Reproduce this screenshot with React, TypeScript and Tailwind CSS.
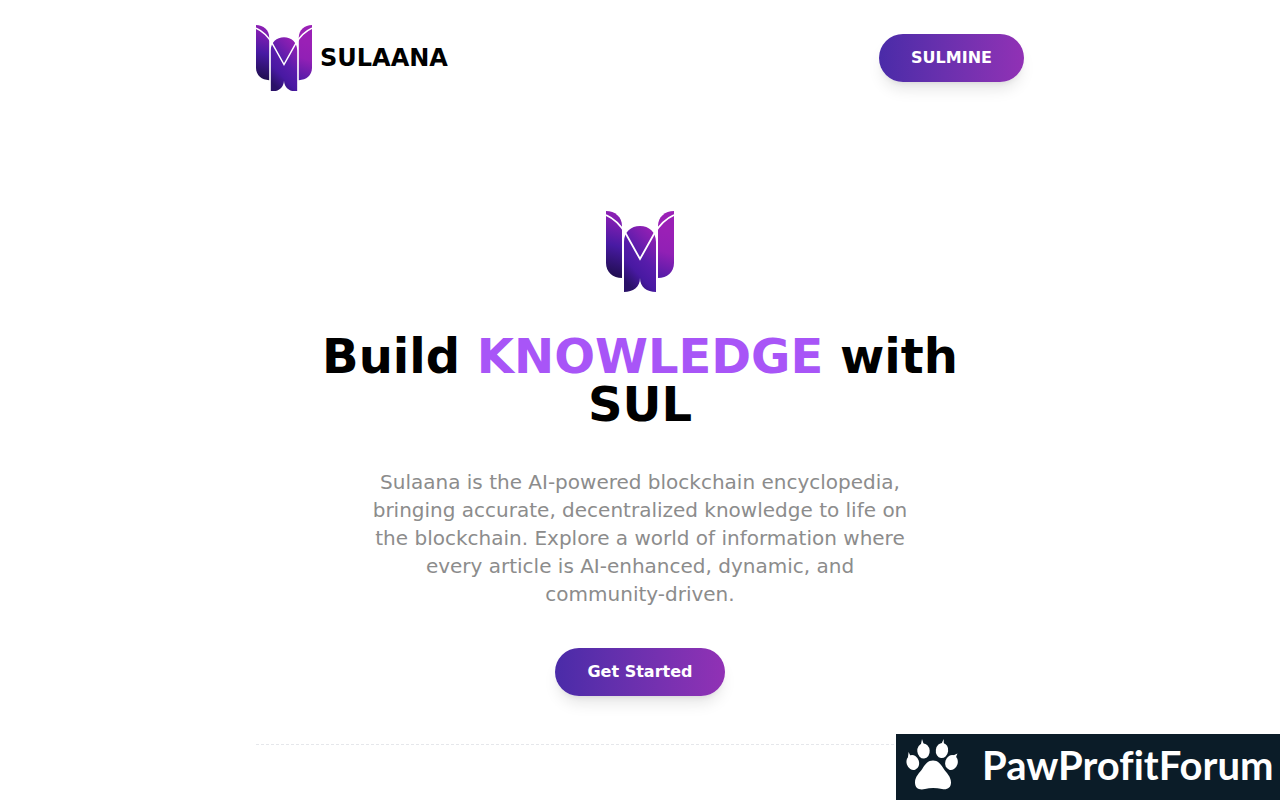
import { useId } from "react";

function Logo({ className }: { className: string }) {
  const id = useId();
  const left = `${id}-left`;
  const body = `${id}-body`;
  const right = `${id}-right`;

  return (
    <svg viewBox="0 0 68 81" className={className} aria-hidden="true">
      <defs>
        <linearGradient id={left} gradientUnits="userSpaceOnUse" x1="16" y1="2" x2="-2" y2="66">
          <stop offset="0" stopColor="#8f1fb4" />
          <stop offset="0.18" stopColor="#7a1eb0" />
          <stop offset="0.5" stopColor="#481aa3" />
          <stop offset="1" stopColor="#1c0d48" />
        </linearGradient>
        <linearGradient id={body} gradientUnits="userSpaceOnUse" x1="46" y1="14" x2="4" y2="54">
          <stop offset="0" stopColor="#9a20b6" />
          <stop offset="0.25" stopColor="#7c1eb0" />
          <stop offset="0.5" stopColor="#581cab" />
          <stop offset="0.75" stopColor="#4819a2" />
          <stop offset="1" stopColor="#2a1168" />
        </linearGradient>
        <linearGradient id={right} gradientUnits="userSpaceOnUse" x1="60" y1="20" x2="44" y2="68">
          <stop offset="0" stopColor="#9a20b6" />
          <stop offset="0.4" stopColor="#9120b5" />
          <stop offset="1" stopColor="#4a1aa5" />
        </linearGradient>
      </defs>
      <path d="M0 0C9 0 16 6 16 15V67C7 67 0 61 0 52Z" fill={`url(#${left})`} />
      <path d="M68 0C59 0 52 6 52 15V67C61 67 68 61 68 52Z" fill={`url(#${right})`} />
      <path
        d="M18 31C18 21 25 15 34 15S50 21 50 31V81C41 81 34 76 34 67C34 76 27 81 18 81Z"
        fill={`url(#${body})`}
      />
      <path
        d="M0 4C7 7 14 13 20 23L34 48L48 23C54 13 61 7 68 4"
        fill="none"
        stroke="#fff"
        strokeWidth="1.8"
      />
    </svg>
  );
}

function Paw() {
  return (
    <svg viewBox="0 0 52 52" className="w-[52px] shrink-0" fill="#fff" aria-hidden="true">
      <ellipse cx="6.8" cy="23.5" rx="6.2" ry="7.5" transform="rotate(-18 6.8 23.5)" />
      <ellipse cx="17.5" cy="12" rx="6.2" ry="7.6" transform="rotate(-5 17.5 12)" />
      <ellipse cx="36" cy="11.5" rx="6.2" ry="7.6" transform="rotate(8 36 11.5)" />
      <ellipse cx="45.5" cy="23.5" rx="6.2" ry="7.5" transform="rotate(18 45.5 23.5)" />
      <path d="M2 18L2.6 13L5 18ZM14.8 6L16 0L18 6ZM35 6L37.6 0L38 6ZM46 17L51.5 14.5L49.5 19Z" />
      <path d="M27 21.500C32 21.500 34.500 25 37.500 29.500C40.500 34 45 37.500 45 43.500C45 49 41 51 36 50C30 48.500 24 48.500 19 50C13 51.500 9 49 9 43.500C9 37.500 13.500 34 16.500 29.500C19.500 25 22 21.500 27 21.500Z" />
    </svg>
  );
}

function PillButton({ children }: { children: string }) {
  return (
    <button
      type="button"
      className="rounded-full bg-linear-to-r from-[#4a2ba8] to-[#9131b5] px-8 py-3 text-base font-bold text-white shadow-lg"
    >
      {children}
    </button>
  );
}

export default function App() {
  return (
    <div className="min-h-screen bg-white font-['DejaVu_Sans',sans-serif] text-black">
      <div className="mx-auto max-w-3xl">
        <header className="flex min-h-[92px] items-center justify-between pt-6">
          <a href="#" className="flex items-center gap-2">
            <Logo className="w-14" />
            <span className="text-2xl font-bold">SULAANA</span>
          </a>
          <PillButton>SULMINE</PillButton>
        </header>

        <main className="flex flex-col items-center border-b border-dashed border-gray-200 pt-[119px] pb-12 text-center">
          <Logo className="w-[68px]" />
          <h1 className="mt-10 max-w-2xl text-5xl leading-none font-bold">
            Build <span className="text-[#a855f7]">KNOWLEDGE</span> with SUL
          </h1>
          <p className="mt-10 max-w-[540px] text-xl leading-7 text-[#8c8c8c]">
            Sulaana is the AI-powered blockchain encyclopedia, bringing accurate,
            decentralized knowledge to life on the blockchain. Explore a world of
            information where every article is AI-enhanced, dynamic, and
            community-driven.
          </p>
          <div className="mt-10">
            <PillButton>Get Started</PillButton>
          </div>
        </main>
      </div>

      <aside className="fixed right-0 bottom-0 flex h-[66px] w-96 items-center gap-6 bg-[#0b1c28] pb-1 pl-[10px] text-white">
        <Paw />
        <span className="font-[Lato,sans-serif] text-[40px] leading-none font-bold [font-variant-ligatures:none]">
          PawProfitForum
        </span>
      </aside>
    </div>
  );
}
